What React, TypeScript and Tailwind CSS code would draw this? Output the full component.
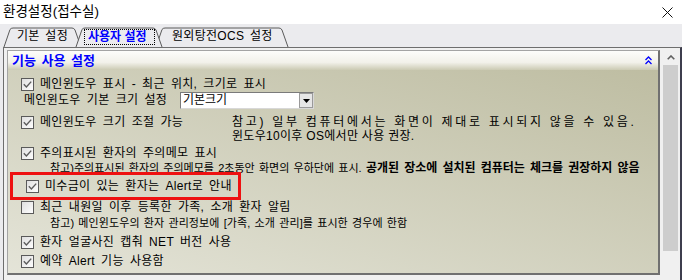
import React from 'react';

const Check = ({ checked = true }: { checked?: boolean }) => (
  <svg width="13" height="13" viewBox="0 0 13 13" className="shrink-0">
    <defs>
      <linearGradient id="cbfill" x1="0" y1="0" x2="1" y2="1">
        <stop offset="0" stopColor="#dedede" />
        <stop offset="1" stopColor="#ffffff" />
      </linearGradient>
    </defs>
    <rect x="0.5" y="0.5" width="12" height="12" fill="url(#cbfill)" stroke="#5a5a5a" />
    {checked && (
      <path d="M2.8 6.3 L5.4 8.9 L10.2 3.6" fill="none" stroke="#5c5c5c" strokeWidth="1.4" />
    )}
  </svg>
);

const Option = ({ label, checked = true, className = '' }: { label: string; checked?: boolean; className?: string }) => (
  <div className={`flex items-center gap-[6px] pl-[13px] ${className}`}>
    <Check checked={checked} />
    <span className="text-[12px] leading-[16px] tracking-[0.3px] [word-spacing:2.5px] whitespace-nowrap">{label}</span>
  </div>
);

const App = () => {
  return (
    <div className="w-[682px] h-[280px] overflow-hidden bg-[#ebebee] text-black font-[family-name:'Liberation_Sans','Noto_Sans_CJK_KR',sans-serif]">
      {/* title bar */}
      <div className="h-[24px] bg-white flex items-center justify-between pl-[3px] pr-[9px]">
        <span className="text-[13.5px] leading-[18px]">환경설정(접수실)</span>
        <svg width="11" height="11" viewBox="0 0 11 11">
          <path d="M0.5 0.5 L10.5 10.5 M10.5 0.5 L0.5 10.5" stroke="#111" strokeWidth="1" />
        </svg>
      </div>

      {/* tabs */}
      <div className="relative h-[23px]">
        <svg className="absolute inset-0" width="682" height="23" viewBox="0 0 682 23">
          <path d="M4 23 L10 5.5 Q11 4 13 4 L72 4 Q74 4 75 6 L81 23" fill="#ebebee" stroke="#5a5a5a" />
          <path d="M156 23 L162 5.5 Q163 4 165 4 L279 4 Q281 4 282 6 L288 23" fill="#ebebee" stroke="#5a5a5a" />
          <path d="M76 23 L82 5.5 Q83 4 85 4 L153 4 Q155 4 156 6 L162 23" fill="#ebebee" stroke="#5a5a5a" />
        </svg>
        <div className="relative flex items-start pt-[5px] text-[12px] leading-[14px]">
          <span className="ml-[17px] w-[67px] tracking-[0.3px] [word-spacing:2px]">기본 설정</span>
          <span className="w-[71px] h-[16px] pl-[3px] border border-dotted border-black font-bold text-[#0000ff]">
            사용자 설정
          </span>
          <span className="ml-[17px] tracking-[0.3px] [word-spacing:2px]">원외탕전OCS 설정</span>
        </div>
      </div>

      {/* page frame */}
      <div className="h-[233px] ml-[3px] flex border-t border-l border-[#6e6e6e] border-r-2 border-r-[#3d3d4d] bg-[#f0f0f0]">
        <div className="pl-[3px] pt-[2px]">
          <div className="w-[653px] h-[225px] flex flex-col border-t border-l border-[#a4a4a4] border-r-2 border-b-2 border-r-[#707070] border-b-[#707070]">
            {/* group header */}
            <div className="h-[19px] shrink-0 flex items-center justify-between pl-[4px] pr-[6px] bg-[linear-gradient(to_bottom,#fdfdfb_0%,#f2f1ea_60%,#cbcab3_100%)]">
              <span className="text-[13px] leading-[16px] font-bold text-[#0000ff] [word-spacing:2px]">기능 사용 설정</span>
              <svg width="7" height="9" viewBox="0 0 7 9">
                <path d="M0.5 4 L3.5 1 L6.5 4 M0.5 8 L3.5 5 L6.5 8" fill="none" stroke="#0000ff" strokeWidth="1.3" />
              </svg>
            </div>

            {/* group body */}
            <div className="flex-1 flex flex-col pt-[6px] bg-[linear-gradient(to_bottom_left,#bebda2,#e4e4d8)]">
              <Option label="메인윈도우 표시 - 최근 위치, 크기로 표시" className="h-[16px]" />

              <div className="h-[18px] flex items-start pl-[16px]">
                <span className="w-[156px] text-[12px] leading-[17px] tracking-[0.3px] [word-spacing:2.5px]">메인윈도우 기본 크기 설정</span>
                <div className="w-[134px] h-[17px] flex bg-white border border-[#7a7a7a] border-r-[#d8d8d8] border-b-[#d8d8d8]">
                  <span className="flex-1 pl-[2px] text-[12px] leading-[14px]">기본크기</span>
                  <div className="w-[14px] h-[15px] flex items-center justify-center bg-[#e6e6e6] border border-[#9a9a9a]">
                    <svg width="7" height="4" viewBox="0 0 7 4">
                      <path d="M0 0 L7 0 L3.5 4 Z" fill="#000" />
                    </svg>
                  </div>
                </div>
              </div>

              <div className="h-[32px] flex items-start pt-[4px]">
                <Option label="메인윈도우 크기 조절 가능" className="h-[16px] w-[224px]" />
                <div className="mt-[1px] text-[12px] leading-[14px] whitespace-nowrap">
                  <div className="tracking-[2.7px]">참고) 일부 컴퓨터에서는 화면이 제대로 표시되지 않을 수 있음.</div>
                  <div className="tracking-[0.3px]">윈도우10이후 OS에서만 사용 권장.</div>
                </div>
              </div>

              <Option label="주의표시된 환자의 주의메모 표시" className="h-[16px] mt-[3px]" />
              <div className="h-[14px] pl-[42px] text-[11px] leading-[14px] whitespace-nowrap [word-spacing:1.2px]">
                참고)주의표시된 환자의 주의메모를 2초동안 화면의 우하단에 표시.{' '}
                <span className="font-bold text-[12px] [word-spacing:1.8px]">공개된 장소에 설치된 컴퓨터는 체크를 권장하지 않음</span>
              </div>

              <div className="pl-[2px] -mt-[3px]">
                <div className="w-[231px] h-[28px] flex items-center border-[3px] border-[#ee1111]">
                  <Option label="미수금이 있는 환자는 Alert로 안내" className="pl-[8px]" />
                </div>
              </div>

              <Option label="최근 내원일 이후 등록한 가족, 소개 환자 알림" checked={false} className="h-[14px]" />
              <div className="h-[18px] flex items-center pl-[42px] text-[11px] leading-[14px] whitespace-nowrap [word-spacing:1px] tracking-[0.1px]">
                참고) 메인윈도우의 환자 관리정보에 [가족, 소개 관리]를 표시한 경우에 한함
              </div>
              <Option label="환자 얼굴사진 캡춰 NET 버전 사용" className="h-[20px]" />
              <Option label="예약 Alert 기능 사용함" className="h-[18px]" />
            </div>
          </div>
        </div>

        {/* scrollbar */}
        <div className="w-[19px] pt-[2px] flex flex-col">
          <div className="h-[15px] flex items-center justify-center pl-[2px]">
            <svg width="8" height="5" viewBox="0 0 8 5">
              <path d="M0.7 4.3 L4 1 L7.3 4.3" fill="none" stroke="#606060" strokeWidth="1.6" />
            </svg>
          </div>
          <div className="ml-[3px] mr-[1px] h-[186px] bg-[#cdcdcd]" />
        </div>
      </div>
    </div>
  );
};

export default App;
